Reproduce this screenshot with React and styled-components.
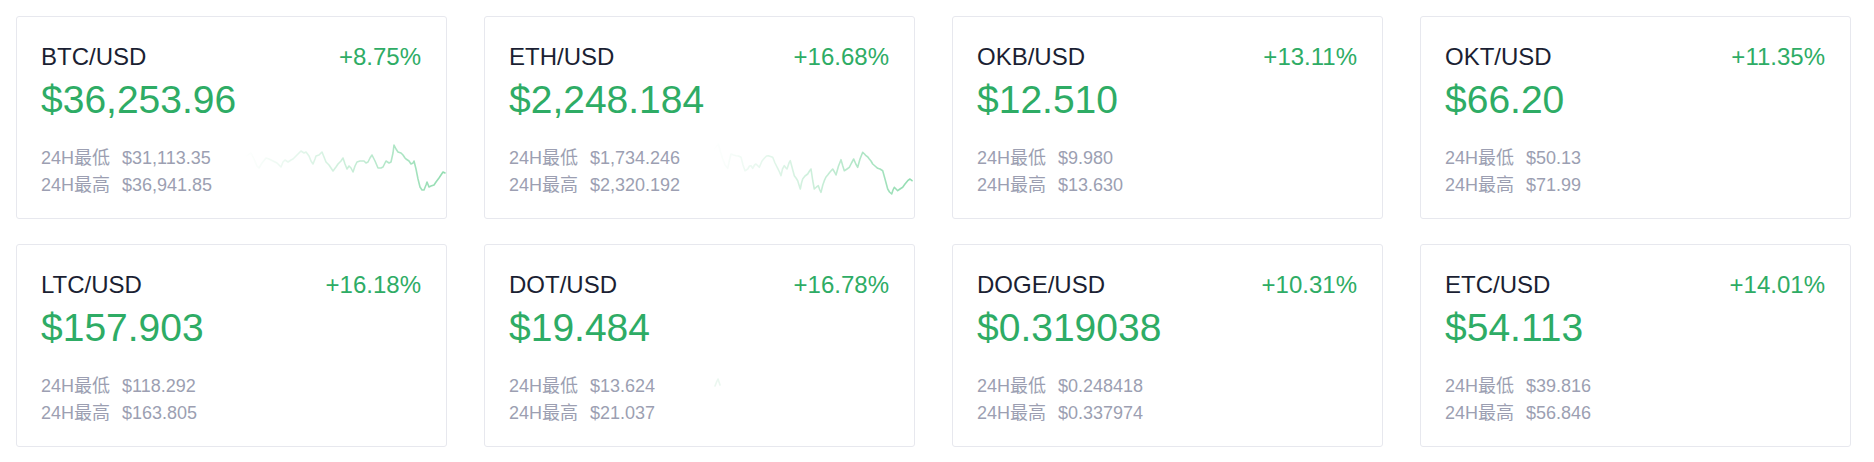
import React from "react";
import styled, { createGlobalStyle } from "styled-components";

const GlobalStyle = createGlobalStyle`
  html, body {
    margin: 0;
    padding: 0;
    background: #fff;
  }
  body {
    font-family: "Liberation Sans", "Noto Sans CJK SC", Arial, sans-serif;
  }
`;

const btcLine = [
  [0, 18], [4, 16], [7, 14], [10, 20], [13, 27], [15, 29], [18, 24], [22, 19], [25, 20], [29, 22],
  [33, 24], [37, 28], [39, 23], [41, 21], [44, 23], [47, 21], [49, 20], [52, 17], [55, 14], [57, 12],
  [60, 14], [62, 13], [65, 17], [67, 22], [69, 25], [71, 20], [72, 17], [75, 16], [78, 13], [80, 18],
  [82, 23], [85, 26], [87, 29], [89, 32], [92, 28], [94, 25], [97, 22], [99, 19], [101, 25], [103, 30],
  [105, 27], [107, 29], [109, 33], [111, 27], [113, 23], [116, 22], [120, 22], [122, 24], [124, 23],
  [126, 19], [128, 16], [131, 22], [134, 29], [137, 29], [139, 28], [141, 24], [142, 22], [145, 24],
  [147, 23], [149, 14], [150, 6], [152, 10], [154, 13], [157, 14], [159, 16], [161, 19], [162, 20],
  [165, 22], [167, 25], [169, 24], [170, 22], [172, 30], [174, 40], [176, 48], [178, 51], [180, 51],
  [182, 46], [183, 43], [185, 48], [187, 47], [190, 46], [192, 43], [195, 39], [197, 36], [199, 33],
  [201, 34],
];

const ethLine = [
  [0.7, 13.3], [3, 9], [6.3, 5], [8.5, 13], [10.7, 20], [13, 26], [15.7, 29.3], [17.5, 21], [19, 15],
  [21.5, 16], [24, 16.7], [26.5, 17], [29, 18.3], [31, 26], [33, 31.7], [35.7, 30], [37.5, 27], [39, 26.7],
  [40.7, 29.3], [42.5, 26], [44, 25], [46, 27], [47.3, 28.3], [50, 22], [52.3, 19.3], [54.5, 17],
  [56.3, 16.7], [58.5, 17.5], [60.7, 18.3], [63, 24], [65.7, 29.3], [67.5, 33], [69, 36.7], [70.5, 30],
  [72.3, 26.7], [74, 29], [75, 30], [77, 24], [78.3, 21.7], [80.5, 30], [82.3, 36.7], [84, 39],
  [85.7, 41.7], [87, 46], [88.3, 50], [89.5, 44], [90.7, 40], [93, 37], [95.7, 35], [97.5, 32], [99, 30],
  [100.8, 42], [102.3, 50], [104.5, 48], [106.3, 46.7], [107.8, 51], [109, 53.3], [110.8, 46],
  [112.3, 41.7], [114, 38], [115.7, 36], [118, 33], [120.7, 30], [122.5, 33], [124, 36], [126.5, 27],
  [129, 20.7], [130.8, 27], [132.3, 31.7], [135, 30], [137.3, 28.3], [139.5, 24], [141.7, 20],
  [143.8, 25], [145.7, 28.3], [148, 20], [150.7, 13.3], [152.5, 15], [154, 16.7], [155.8, 18],
  [157.3, 20], [159, 22], [160.7, 25], [163, 27], [165.7, 29.3], [168, 30], [170.7, 31.7], [173, 40],
  [175.7, 50], [177.5, 53], [179.7, 55], [181, 51], [182.3, 48.3], [184, 50], [185.7, 51.7], [188, 50],
  [190.7, 48.3], [193, 45], [195.7, 41.7], [198, 40], [200, 41.7],
];

const dotLine = [[3, 19], [5, 14], [6, 12], [7, 15], [8, 18]];

const markets = [
  { pair: "BTC/USD", change: "+8.75%", price: "$36,253.96", low: "$31,113.35", high: "$36,941.85", line: btcLine },
  { pair: "ETH/USD", change: "+16.68%", price: "$2,248.184", low: "$1,734.246", high: "$2,320.192", line: ethLine },
  { pair: "OKB/USD", change: "+13.11%", price: "$12.510", low: "$9.980", high: "$13.630" },
  { pair: "OKT/USD", change: "+11.35%", price: "$66.20", low: "$50.13", high: "$71.99" },
  { pair: "LTC/USD", change: "+16.18%", price: "$157.903", low: "$118.292", high: "$163.805" },
  { pair: "DOT/USD", change: "+16.78%", price: "$19.484", low: "$13.624", high: "$21.037", line: dotLine, faint: true },
  { pair: "DOGE/USD", change: "+10.31%", price: "$0.319038", low: "$0.248418", high: "$0.337974" },
  { pair: "ETC/USD", change: "+14.01%", price: "$54.113", low: "$39.816", high: "$56.846" },
];

function Sparkline({ points, id, faint }) {
  const d = points.map((p, i) => `${i ? "L" : "M"}${p[0]},${p[1]}`).join(" ");
  return (
    <Chart width="202" height="58" viewBox="0 0 202 58">
      <defs>
        <linearGradient id={id} x1="0" y1="0" x2="1" y2="0">
          <stop offset="0%" stopColor="#7fd6a3" stopOpacity="0" />
          <stop offset="45%" stopColor="#7fd6a3" stopOpacity="0.35" />
          <stop offset="100%" stopColor="#7fd6a3" stopOpacity="0.85" />
        </linearGradient>
      </defs>
      <path
        d={d}
        fill="none"
        stroke={faint ? "#d8efe2" : `url(#${id})`}
        strokeOpacity={faint ? 0.5 : 1}
        strokeWidth="1.6"
        strokeLinejoin="round"
        strokeLinecap="round"
      />
    </Chart>
  );
}

function MarketCard({ item, index }) {
  return (
    <Card>
      <Header>
        <Pair>{item.pair}</Pair>
        <Change>{item.change}</Change>
      </Header>
      <Price>{item.price}</Price>
      <Bottom>
        <Stats>
          <StatRow>
            <StatLabel>24H最低</StatLabel>
            <span>{item.low}</span>
          </StatRow>
          <StatRow>
            <StatLabel>24H最高</StatLabel>
            <span>{item.high}</span>
          </StatRow>
        </Stats>
        {item.line && <Sparkline points={item.line} id={`spark-${index}`} faint={item.faint} />}
      </Bottom>
    </Card>
  );
}

export default function App() {
  return (
    <>
      <GlobalStyle />
      <Grid>
        {markets.map((m, i) => (
          <MarketCard key={m.pair} item={m} index={i} />
        ))}
      </Grid>
    </>
  );
}

const Grid = styled.div`
  display: grid;
  grid-template-columns: repeat(4, 431px);
  column-gap: 37px;
  row-gap: 25px;
  padding: 16px 0 0 16px;
`;

const Card = styled.div`
  box-sizing: border-box;
  height: 203px;
  border: 1px solid #e7e8ee;
  border-radius: 3px;
  background: #fff;
  padding: 24px 25px 18px 24px;
  display: flex;
  flex-direction: column;
  overflow: hidden;
`;

const Header = styled.div`
  display: flex;
  justify-content: space-between;
  align-items: center;
  height: 32px;
  font-size: 24px;
  line-height: 32px;
`;

const Pair = styled.span`
  color: #1b1f33;
`;

const Change = styled.span`
  color: #2eac65;
`;

const Price = styled.div`
  margin-top: 4px;
  font-size: 39px;
  line-height: 46px;
  color: #2eac65;
`;

const Bottom = styled.div`
  margin-top: 22px;
  display: flex;
  justify-content: space-between;
  align-items: flex-start;
`;

const Stats = styled.div`
  display: flex;
  flex-direction: column;
  font-size: 18px;
  line-height: 27px;
  color: #9c9fb2;
`;

const StatRow = styled.div`
  display: flex;
  white-space: nowrap;
`;

const StatLabel = styled.span`
  margin-right: 12px;
`;

const Chart = styled.svg`
  display: block;
  flex: none;
  margin-top: -6px;
  margin-right: -25px;
`;
